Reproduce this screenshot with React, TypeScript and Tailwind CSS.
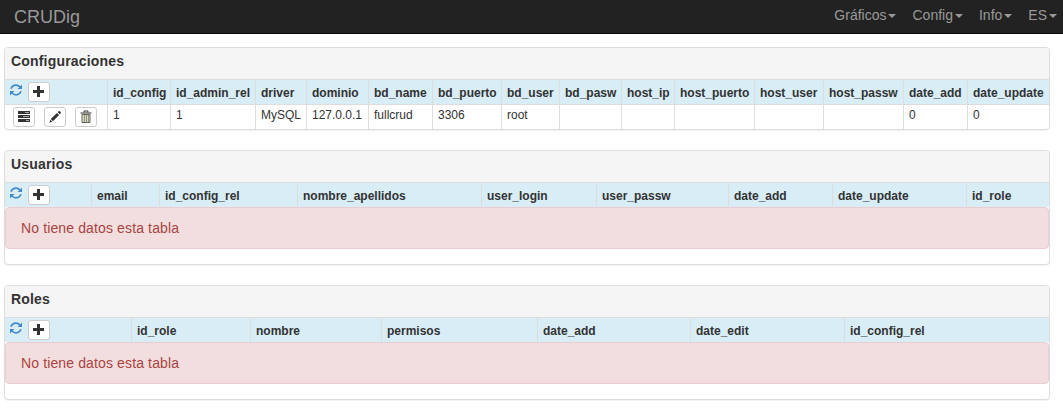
import React from "react";

const RefreshIcon = () => (
  <svg viewBox="0 0 12 12" className="h-3 w-3 shrink-0 text-[#428bca]" fill="none" stroke="currentColor" strokeWidth="1.7">
    <path d="M1 4.700C1.900 2.400 3.700 1.200 6 1.200c1.600 0 2.900.6 4 1.800" />
    <path d="M11 7.300c-.9 2.300-2.700 3.500-5 3.500-1.600 0-2.900-.6-4-1.800" />
    <path d="M12 .6v4.500H7.500zM0 11.400V6.900h4.500z" fill="currentColor" stroke="none" />
  </svg>
);

const PlusIcon = () => (
  <svg viewBox="0 0 12 12" className="h-3 w-3" fill="currentColor">
    <path d="M4 0h3v4h4v3H7v4H4V7H0V4h4z" />
  </svg>
);

const TasksIcon = () => (
  <svg viewBox="0 0 12 12" className="h-3 w-3" fill="currentColor">
    <path d="M.5 0h11a.5.5 0 0 1 .5.500v2a.5.5 0 0 1-.5.500H.5a.5.5 0 0 1-.5-.5v-2A.5.5 0 0 1 .5 0zM.5 4h11a.5.5 0 0 1 .5.500v2a.5.5 0 0 1-.5.500H.5a.5.5 0 0 1-.5-.5v-2A.5.5 0 0 1 .5 4zM.5 8h11a.5.5 0 0 1 .5.500v2a.5.5 0 0 1-.5.500H.5a.5.5 0 0 1-.5-.5v-2A.5.5 0 0 1 .5 8z" />
    <path d="M7 1h4v1H7zM5 5h6v1H5zM8 9h3v1H8z" fill="#aaa" />
  </svg>
);

const PencilIcon = () => (
  <svg viewBox="0 0 12 12" className="h-3 w-3" fill="currentColor">
    <path d="M9.600.3c.4-.4.8-.4 1.200 0l.9.900c.4.400.4.800 0 1.200l-.9.900-2.100-2.100zM8 1.900 10.100 4 3.900 10.200 1.800 8.100zM1.300 8.700l2 2L.3 11.700z" />
  </svg>
);

const TrashIcon = () => (
  <svg viewBox="0 0 12 14" className="h-3.5 w-3" fill="none" stroke="#333">
    <path d="M4 2.500V1h4v1.500" />
    <path d="M.5 3h11" strokeWidth="1.200" />
    <path d="M2 4.500h8v8H2z" fill="#d8d8c0" stroke="#66665a" />
    <path d="M4.500 5v7M6.500 5v7M8.500 5v7" stroke="#8a8a78" strokeWidth=".9" />
  </svg>
);

const IconButton = ({ label, children }: { label: string; children: React.ReactNode }) => (
  <button
    aria-label={label}
    className="flex h-5 w-[22px] shrink-0 items-center justify-center rounded-[3px] border border-[#ccc] bg-white text-[#333]"
  >
    {children}
  </button>
);

const Panel = ({ title, children }: { title: string; children: React.ReactNode }) => (
  <section className="overflow-hidden rounded border border-[#ddd] bg-white shadow-[0_1px_1px_rgba(0,0,0,0.05)]">
    <h2 className="h-8 border-b border-[#ddd] bg-[#f5f5f5] pl-1.5 pt-[3px] text-[14px] font-bold leading-5 tracking-[0.18px]">{title}</h2>
    {children}
  </section>
);

const HeaderRow = ({ cols, names, last }: { cols: string; names: string[]; last?: boolean }) => (
  <div className={`grid bg-[#d9edf7] text-[12px] font-bold leading-[26px] ${cols} ${last ? "h-6" : "h-[25px] border-b border-[#ddd]"}`}>
    <div className="flex gap-[6px] border-r border-[#ddd] pl-[5px] pt-[2px]">
      <div className="pt-[2px]"><RefreshIcon /></div>
      <IconButton label="Añadir"><PlusIcon /></IconButton>
    </div>
    {names.map((n, i) => (
      <div key={n} className={i < names.length - 1 ? "border-r border-[#ddd] pl-[5px]" : "pl-[5px]"}>{n}</div>
    ))}
  </div>
);

const EmptyAlert = () => (
  <div className="mb-[15px] h-[42px] rounded border border-[#ebccd1] bg-[#f2dede] pl-[15px] text-[14px] leading-10 tracking-[0.13px] text-[#a94442]">
    No tiene datos esta tabla
  </div>
);

const configCols =
  "grid-cols-[103px_63px_85px_51px_62px_64px_69px_58px_62px_53px_80px_69px_80px_64px_81px]";
const configNames = ["id_config", "id_admin_rel", "driver", "dominio", "bd_name", "bd_puerto", "bd_user", "bd_pasw", "host_ip", "host_puerto", "host_user", "host_passw", "date_add", "date_update"];
const configValues = ["1", "1", "MySQL", "127.0.0.1", "fullcrud", "3306", "root", "", "", "", "", "", "0", "0"];

export default function App() {
  return (
    <div className="h-[408px] overflow-hidden bg-white font-['Liberation_Sans',Arial,sans-serif] text-[#333]">
      <nav className="flex h-[34px] items-center justify-between border-b border-[#080808] bg-[#222] pl-3.5 pr-1.5 text-[#999]">
        <span className="text-[18px] leading-5">CRUDig</span>
        <ul className="flex gap-4 pb-[3px] text-[14px] leading-5">
          {["Gráficos", "Config", "Info", "ES"].map((item) => (
            <li key={item} className="flex items-center gap-[2px]">
              {item}
              <span className="mt-px border-x-4 border-t-4 border-x-transparent border-t-[#999]" />
            </li>
          ))}
        </ul>
      </nav>
      <main className="ml-1 mt-[13px] flex w-[1046px] flex-col gap-5">
        <Panel title="Configuraciones">
          <HeaderRow cols={configCols} names={configNames} />
          <div className={`grid h-6 text-[12px] leading-[20px] ${configCols}`}>
            <div className="flex gap-[9px] border-r border-[#ddd] pl-2 pt-[2px]">
              <IconButton label="Tablas"><TasksIcon /></IconButton>
              <IconButton label="Editar"><PencilIcon /></IconButton>
              <IconButton label="Borrar"><TrashIcon /></IconButton>
            </div>
            {configValues.map((v, i) => (
              <div key={i} className={i < 13 ? "border-r border-[#ddd] pl-[5px]" : "pl-[5px]"}>{v}</div>
            ))}
          </div>
        </Panel>
        <Panel title="Usuarios">
          <HeaderRow
            last
            cols="grid-cols-[87px_68px_138px_184px_115px_132px_104px_134px_82px]"
            names={["email", "id_config_rel", "nombre_apellidos", "user_login", "user_passw", "date_add", "date_update", "id_role"]}
          />
          <EmptyAlert />
        </Panel>
        <Panel title="Roles">
          <HeaderRow
            last
            cols="grid-cols-[127px_119px_131px_156px_153px_154px_204px]"
            names={["id_role", "nombre", "permisos", "date_add", "date_edit", "id_config_rel"]}
          />
          <EmptyAlert />
        </Panel>
      </main>
    </div>
  );
}
